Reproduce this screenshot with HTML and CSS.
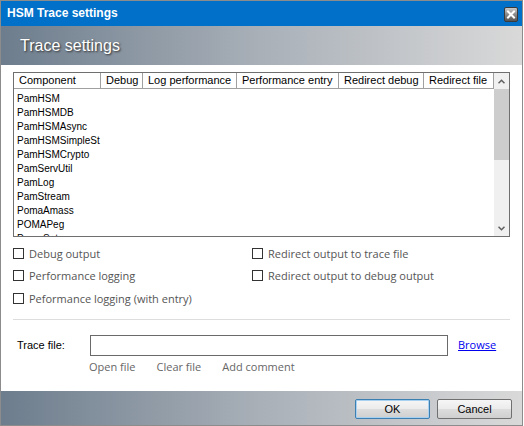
FILE: index.html
```html
<!DOCTYPE html>
<html>
<head>
<meta charset="utf-8">
<link rel="stylesheet" href="styles.css">
</head>
<body>
<div class="window">
  <div class="titlebar">
    <span class="title">HSM Trace settings</span>
    <span class="close">
      <svg width="14" height="15" viewBox="0 0 14 15">
        <defs>
          <linearGradient id="cg" x1="0" y1="0" x2="0" y2="1">
            <stop offset="0" stop-color="#d0d0d0"/>
            <stop offset="0.5" stop-color="#8a8a8a"/>
            <stop offset="1" stop-color="#505050"/>
          </linearGradient>
        </defs>
        <rect x="0.5" y="0.5" width="13" height="14" rx="1.5" fill="url(#cg)" stroke="#3a3a3a"/>
        <path d="M4 4.5 L10 10.5 M10 4.5 L4 10.5" stroke="#fff" stroke-width="2" stroke-linecap="square"/>
      </svg>
    </span>
  </div>
  <div class="banner"><span class="banner-text">Trace settings</span></div>
  <div class="content">
    <div class="list">
      <div class="list-main">
        <div class="list-head">
          <div class="hcell c1">Component</div>
          <div class="hcell c2">Debug</div>
          <div class="hcell c3">Log performance</div>
          <div class="hcell c4">Performance entry</div>
          <div class="hcell c5">Redirect debug</div>
          <div class="hcell c6">Redirect file</div>
        </div>
        <div class="rows">
          <div class="row">PamHSM</div>
          <div class="row">PamHSMDB</div>
          <div class="row">PamHSMAsync</div>
          <div class="row">PamHSMSimpleSt</div>
          <div class="row">PamHSMCrypto</div>
          <div class="row">PamServUtil</div>
          <div class="row">PamLog</div>
          <div class="row">PamStream</div>
          <div class="row">PomaAmass</div>
          <div class="row">POMAPeg</div>
          <div class="row">PomaSetup</div>
        </div>
      </div>
      <div class="scrollbar">
        <div class="sb-btn">
          <svg width="7" height="5" viewBox="0 0 7 5"><path d="M0.5 4.2 L3.5 1.2 L6.5 4.2" fill="none" stroke="#606060" stroke-width="1.5"/></svg>
        </div>
        <div class="sb-thumb"></div>
        <div class="sb-track"></div>
        <div class="sb-btn">
          <svg width="7" height="5" viewBox="0 0 7 5"><path d="M0.5 0.8 L3.5 3.8 L6.5 0.8" fill="none" stroke="#606060" stroke-width="1.5"/></svg>
        </div>
      </div>
    </div>

    <div class="options">
      <label class="opt"><span class="box"></span>Debug output</label>
      <label class="opt"><span class="box"></span>Redirect output to trace file</label>
      <label class="opt"><span class="box"></span>Performance logging</label>
      <label class="opt"><span class="box"></span>Redirect output to debug output</label>
      <label class="opt"><span class="box"></span>Peformance logging (with entry)</label>
    </div>

    <div class="sep"></div>

    <div class="file-row">
      <span class="file-label">Trace file:</span>
      <span class="file-input"></span>
      <a class="browse" href="#">Browse</a>
    </div>
    <div class="actions">
      <span class="act">Open file</span>
      <span class="act">Clear file</span>
      <span class="act">Add comment</span>
    </div>
  </div>
  <div class="footer">
    <button class="btn ok">OK</button>
    <button class="btn">Cancel</button>
  </div>
</div>
</body>
</html>
```
FILE: styles.css
```css
html, body {
  margin: 0;
  padding: 0;
  background: #ffffff;
}
.window {
  width: 523px;
  height: 426px;
  box-sizing: border-box;
  border: 1px solid #8c8c8c;
  display: flex;
  flex-direction: column;
  background: #ffffff;
  overflow: hidden;
}
.titlebar {
  height: 25px;
  flex: 0 0 25px;
  background: #0070c9;
  display: flex;
  align-items: center;
  justify-content: space-between;
  padding: 0 4px 0 6px;
}
.title {
  color: #ffffff;
  font-family: "Liberation Sans", Arial, sans-serif;
  font-weight: bold;
  font-size: 12px;
  margin-top: -1px;
}
.close {
  display: flex;
  margin-top: 1px;
}
.banner {
  height: 39px;
  flex: 0 0 39px;
  background: linear-gradient(to right, #6d7d8d 0%, #a9b0b8 50%, #d9d9d9 100%);
  display: flex;
  align-items: center;
  padding-left: 19px;
}
.banner-text {
  color: #ffffff;
  font-family: "Liberation Sans", Arial, sans-serif;
  font-size: 16px;
  text-shadow: 1px 1px 2px #303030;
  margin-top: 1px;
}
.content {
  flex: 1;
  padding: 7px 12px 0 12px;
  display: flex;
  flex-direction: column;
}
.list {
  width: 497px;
  height: 165px;
  box-sizing: border-box;
  border: 1px solid #6f6f6f;
  display: flex;
  overflow: hidden;
}
.list-main {
  width: 480px;
  display: flex;
  flex-direction: column;
}
.list-head {
  display: flex;
  height: 17px;
  box-sizing: border-box;
  border-bottom: 1px solid #a0a0a0;
}
.hcell {
  box-sizing: border-box;
  border-right: 1px solid #a0a0a0;
  font-family: "Liberation Sans", Arial, sans-serif;
  font-size: 11px;
  color: #000;
  padding-left: 5px;
  line-height: 15px;
  white-space: nowrap;
  overflow: hidden;
}
.c1 { width: 87px; }
.c2 { width: 42px; }
.c3 { width: 94px; }
.c4 { width: 102px; }
.c5 { width: 85px; }
.c6 { width: 70px; }
.rows {
  padding-top: 3px;
}
.row {
  height: 14px;
  line-height: 14px;
  padding-left: 3px;
  font-family: "Liberation Sans", Arial, sans-serif;
  font-size: 10px;
  color: #000;
  white-space: nowrap;
}
.scrollbar {
  width: 15px;
  display: flex;
  flex-direction: column;
  background: #f0f0f0;
}
.sb-btn {
  height: 16px;
  flex: 0 0 16px;
  display: flex;
  align-items: center;
  justify-content: center;
  background: #f0f0f0;
}
.sb-thumb {
  height: 71px;
  flex: 0 0 71px;
  background: #cdcdcd;
}
.sb-track {
  flex: 1;
}
.options {
  display: grid;
  grid-template-columns: 239px 1fr;
  grid-auto-rows: 22.5px;
  padding-top: 5px;
}
.opt {
  display: flex;
  align-items: center;
  font-family: "Open Sans", sans-serif;
  font-size: 11px;
  color: #555555;
  white-space: nowrap;
}
.box {
  width: 9px;
  height: 9px;
  border: 1px solid #333333;
  background: #fff;
  margin-right: 5px;
  flex: 0 0 auto;
}
.sep {
  height: 1px;
  background: #dddddd;
  margin-top: 9px;
  width: 497px;
}
.file-row {
  display: flex;
  align-items: center;
  margin-top: 15px;
  height: 21px;
}
.file-label {
  font-family: "Liberation Sans", Arial, sans-serif;
  font-size: 11px;
  color: #000;
  width: 77px;
  padding-left: 4px;
  box-sizing: border-box;
  flex: 0 0 auto;
}
.file-input {
  width: 358px;
  height: 21px;
  box-sizing: border-box;
  border: 1px solid #6a6a6a;
  background: #fff;
}
.browse {
  margin-left: 10px;
  font-family: "Open Sans", sans-serif;
  font-size: 11px;
  color: #0000ee;
  text-decoration: underline;
  margin-top: -2px;
}
.actions {
  display: flex;
  gap: 21px;
  padding-left: 76px;
  margin-top: 3px;
}
.act {
  font-family: "Open Sans", sans-serif;
  font-size: 11px;
  color: #666666;
}
.footer {
  height: 34px;
  flex: 0 0 34px;
  background: linear-gradient(to right, #6d7d8d 0%, #a9b0b8 50%, #d9d9d9 100%);
  display: flex;
  align-items: center;
  justify-content: flex-end;
  gap: 7px;
  padding-right: 10px;
}
.btn {
  width: 75px;
  height: 20px;
  box-sizing: border-box;
  border: 1px solid #707070;
  border-radius: 2px;
  background: linear-gradient(to bottom, #f6f6f6 0%, #ebebeb 50%, #dddddd 51%, #cfcfcf 100%);
  font-family: "Liberation Sans", Arial, sans-serif;
  font-size: 11px;
  color: #000;
  padding: 0;
  margin-top: 2px;
}
.btn.ok {
  border: 1px solid #3c7fb1;
  box-shadow: inset 0 0 0 1px #a8d0f0;
}
```
